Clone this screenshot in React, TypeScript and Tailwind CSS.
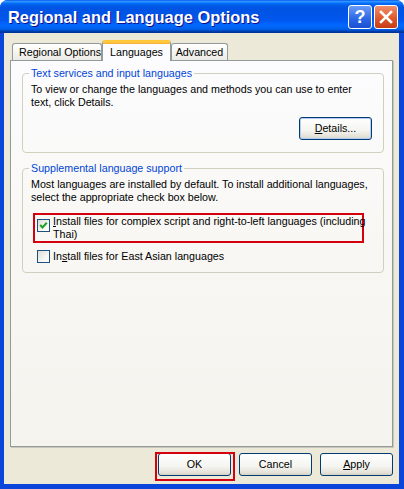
import React from "react";

const titleGradient =
  "bg-[linear-gradient(180deg,#0058ee_0%,#3593ff_4%,#288eff_6%,#127dff_8%,#036ffc_10%,#0262ee_14%,#0057e5_20%,#0054e3_24%,#0055eb_56%,#005bf5_66%,#026afe_76%,#0062ef_86%,#0052d6_92%,#0040ab_94%,#003092_100%)]";

const XpButton = ({
  children,
  className = "",
}: {
  children: React.ReactNode;
  className?: string;
}) => (
  <div
    className={`relative flex items-center justify-center w-[73px] h-[23px] rounded-[3px] border border-[#003c74] bg-[linear-gradient(180deg,#ffffff_0%,#f4f4f0_60%,#e3e0d6_90%,#d6d0c5_100%)] text-black ${className}`}
  >
    {children}
  </div>
);

const Checkbox = ({ checked }: { checked?: boolean }) => (
  <div className="w-[13px] h-[13px] shrink-0 border border-[#1c5180] bg-[linear-gradient(135deg,#dcdcd7_0%,#f6f6f3_60%,#ffffff_100%)] flex items-center justify-center">
    {checked && (
      <svg width="11" height="11" viewBox="0 0 11 11">
        <polyline
          points="2.2,5 4.5,7.5 8.8,2.8"
          fill="none"
          stroke="#21a121"
          strokeWidth="2"
        />
      </svg>
    )}
  </div>
);

export default function App() {
  return (
    <div className="w-[404px] h-[489px] flex flex-col bg-[#0a46d9] rounded-t-[8px] overflow-hidden font-['Liberation_Sans',Arial,sans-serif] text-[10.7px] leading-[13px] text-black whitespace-nowrap">
      {/* title bar */}
      <div className={`h-[33px] shrink-0 flex items-center pl-[8px] pr-[6px] ${titleGradient}`}>
        <span className="flex-1 text-white font-bold text-[16.4px] leading-[20px] pt-[1px] [text-shadow:1px_1px_#0f1089]">
          Regional and Language Options
        </span>
        <div className="flex gap-[2px]">
          <div className="w-[24px] h-[24px] rounded-[3px] border border-white bg-[linear-gradient(180deg,#6b9cf8_0%,#2a66e6_60%,#1d50d0_100%)] flex items-center justify-center text-white font-bold text-[18px] leading-none">
            ?
          </div>
          <div className="w-[24px] h-[24px] rounded-[3px] border border-white bg-[linear-gradient(180deg,#ef8f6c_0%,#e0582c_55%,#c43d16_100%)] flex items-center justify-center">
            <svg width="14" height="14" viewBox="0 0 14 14">
              <path d="M2 2 L12 12 M12 2 L2 12" stroke="#fff" strokeWidth="2.6" strokeLinecap="square" />
            </svg>
          </div>
        </div>
      </div>

      {/* body */}
      <div className="flex-1 ml-[4px] mr-[5px] mb-[5px] bg-[#ece9d8] flex flex-col px-[6px]">
        {/* tabs */}
        <div className="flex items-end pt-[7px] pl-[2px] h-[27px]">
          <div className="w-[90px] h-[17px] flex items-center pl-[6px] border border-b-0 border-[#919b9c] rounded-t-[3px] bg-[linear-gradient(180deg,#ffffff_0%,#f3f3ef_60%,#ecebe5_100%)]">
            Regional Options
          </div>
          <div className="relative z-10 w-[69px] h-[21px] -mb-[1px] flex items-center justify-center border-x border-[#919b9c] rounded-t-[3px] bg-[#fcfcfe] border-t-[3px] border-t-[#ffc83c] shadow-[inset_0_1px_0_#f5b240]">
            Languages
          </div>
          <div className="w-[57px] h-[17px] flex items-center justify-center border border-b-0 border-[#919b9c] rounded-t-[3px] bg-[linear-gradient(180deg,#ffffff_0%,#f3f3ef_60%,#ecebe5_100%)]">
            Advanced
          </div>
        </div>

        {/* panel */}
        <div className="h-[387px] border border-[#919b9c] shadow-[1px_1px_0_#c9c7b8] bg-[linear-gradient(180deg,#fcfcfe_0%,#f8f7f3_50%,#f4f3ee_100%)] pl-[11px] pt-[6px]">
          <fieldset className="w-[362px] border border-[#d0d0bf] rounded-[4px] pl-[8px] pr-[11px] pb-[12px]">
            <legend className="-ml-[2px] px-[2px] text-[#0046d5]">
              Text services and input languages
            </legend>
            <div className="mt-[3px]">
              To view or change the languages and methods you can use to enter
              <br />
              text, click Details.
            </div>
            <div className="flex justify-end mt-[8px]">
              <XpButton className="h-[21px] shadow-[inset_0_0_0_1px_#b4ccf4]">
                <span>
                  <span className="underline">D</span>etails...
                </span>
              </XpButton>
            </div>
          </fieldset>

          <fieldset className="w-[362px] mt-[9px] border border-[#d0d0bf] rounded-[4px] pl-[8px] pr-[8px] pb-[9px]">
            <legend className="-ml-[2px] px-[2px] text-[#0046d5]">
              Supplemental language support
            </legend>
            <div className="mt-[3px]">
              Most languages are installed by default. To install additional languages,
              <br />
              select the appropriate check box below.
            </div>
            <div className="mt-[9px] ml-[2px] w-[331px] h-[30px] border-2 border-[#d40010] flex items-start pl-[2px]">
              <div className="mt-[4px]">
                <Checkbox checked />
              </div>
              <div className="ml-[3px]">
                <span className="underline">I</span>nstall files for complex script and right-to-left languages (including
                <br />
                Thai)
              </div>
            </div>
            <div className="mt-[7px] ml-[6px] flex items-center">
              <Checkbox />
              <div className="ml-[3px]">
                In<span className="underline">s</span>tall files for East Asian languages
              </div>
            </div>
          </fieldset>
        </div>

        {/* buttons */}
        <div className="flex justify-end gap-[8px] mt-[6px]">
          <XpButton>
            OK
            <div className="absolute -left-[4px] -top-[2px] -right-[5px] -bottom-[6px] border-2 border-[#d40010] pointer-events-none" />
          </XpButton>
          <XpButton>Cancel</XpButton>
          <XpButton>
            <span>
              <span className="underline">A</span>pply
            </span>
          </XpButton>
        </div>
      </div>
    </div>
  );
}
